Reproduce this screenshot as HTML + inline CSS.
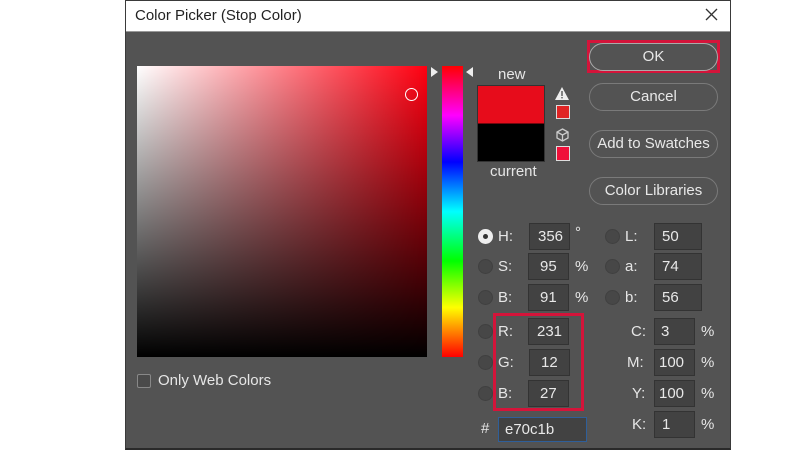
<!DOCTYPE html>
<html><head><style>
*{margin:0;padding:0;box-sizing:border-box}
body{width:800px;height:450px;background:#fff;position:relative;overflow:hidden;font-family:"Liberation Sans",sans-serif;}
.a{position:absolute}
.dlg{left:125px;top:0;width:606px;height:450px;background:#535353;border:1px solid #3a3a3a;border-bottom:2px solid #2a2a2a}
.title{left:126px;top:1px;width:604px;height:31px;background:#fff;border-bottom:1px solid #999;font-size:15px;color:#222;padding:6px 0 0 9px}
.t{color:#e6e6e6;font-size:15px}
.btn{left:589px;width:129px;height:28px;border:1px solid #7a7a7a;border-radius:14px;color:#e8e8e8;font-size:15px;text-align:center;line-height:26px}
.in{background:#424242;border:1px solid #333;color:#e8e8e8;font-size:15px;padding-left:11px;line-height:25px;height:27px}
.rd{width:15px;height:15px;border-radius:50%;background:#474747;border:1px solid #404040}
</style></head><body>
<div class="a dlg"></div>
<div class="a title">Color Picker (Stop Color)</div>
<svg class="a" style="left:705px;top:8px" width="13" height="13"><path d="M1 1L12 12M12 1L1 12" stroke="#333" stroke-width="1.3"/></svg>
<!-- picker -->
<div class="a" style="left:137px;top:66px;width:290px;height:291px;background:linear-gradient(to bottom,rgba(0,0,0,0),#000),linear-gradient(to right,#fff,#ff0011)"></div>
<div class="a" style="left:405px;top:88px;width:13px;height:13px;border:1px solid #fff;border-radius:50%"></div>
<div class="a" style="left:442px;top:66px;width:21px;height:291px;background:linear-gradient(to bottom,#f00,#f0f 17%,#00f 33%,#0ff 50%,#0f0 67%,#ff0 83%,#f00)"></div>
<div class="a" style="left:431px;top:67px;width:0;height:0;border-top:5px solid transparent;border-bottom:5px solid transparent;border-left:7px solid #eee"></div>
<div class="a" style="left:466px;top:67px;width:0;height:0;border-top:5px solid transparent;border-bottom:5px solid transparent;border-right:7px solid #eee"></div>
<div class="a t" style="left:498px;top:66px">new</div>
<div class="a" style="left:477px;top:85px;width:68px;height:77px;border:1px solid #333;background:linear-gradient(#e70c1b 50%,#000 50%)"></div>
<div class="a t" style="left:490px;top:163px">current</div>
<svg class="a" style="left:555px;top:87px" width="14" height="13"><path d="M7 0L14 13H0Z" fill="#eee"/><rect x="6.3" y="4" width="1.4" height="5" fill="#555"/><rect x="6.3" y="10" width="1.4" height="1.4" fill="#555"/></svg>
<div class="a" style="left:556px;top:105px;width:14px;height:14px;background:#e02424;border:1px solid #ddd"></div>
<svg class="a" style="left:556px;top:128px" width="13" height="14"><path d="M6.5 1L12 4V10L6.5 13L1 10V4Z M1 4L6.5 7L12 4 M6.5 7V13" fill="none" stroke="#ccc" stroke-width="1.3"/></svg>
<div class="a" style="left:556px;top:146px;width:14px;height:15px;background:#f0103a;border:1px solid #ddd"></div>
<!-- buttons -->
<div class="a" style="left:587px;top:40px;width:133px;height:33px;border:3px solid #d4143a"></div>
<div class="a btn" style="top:43px;border-color:#aaa">OK</div>
<div class="a btn" style="top:83px">Cancel</div>
<div class="a btn" style="top:130px">Add to Swatches</div>
<div class="a btn" style="top:177px">Color Libraries</div>
<!-- fields -->
<div class="a rd" style="left:478px;top:229px;background:#eee;border-color:#eee"></div>
<div class="a" style="left:483px;top:234px;width:5px;height:5px;border-radius:50%;background:#333"></div>
<div class="a t" style="left:498px;top:228px">H:</div><div class="a in" style="left:529px;top:223px;width:41px;padding-left:8px">356</div><div class="a t" style="left:575px;top:224px">°</div>
<div class="a rd" style="left:478px;top:259px"></div><div class="a t" style="left:498px;top:258px">S:</div><div class="a in" style="left:528px;top:253px;width:41px">95</div><div class="a t" style="left:575px;top:258px">%</div>
<div class="a rd" style="left:478px;top:290px"></div><div class="a t" style="left:498px;top:289px">B:</div><div class="a in" style="left:528px;top:284px;width:41px">91</div><div class="a t" style="left:575px;top:289px">%</div>
<div class="a rd" style="left:605px;top:229px"></div><div class="a t" style="left:625px;top:228px">L:</div><div class="a in" style="left:654px;top:223px;width:48px;padding-left:7px">50</div>
<div class="a rd" style="left:605px;top:259px"></div><div class="a t" style="left:625px;top:258px">a:</div><div class="a in" style="left:654px;top:253px;width:48px;padding-left:7px">74</div>
<div class="a rd" style="left:605px;top:290px"></div><div class="a t" style="left:625px;top:289px">b:</div><div class="a in" style="left:654px;top:284px;width:48px;padding-left:7px">56</div>
<div class="a rd" style="left:478px;top:324px"></div><div class="a t" style="left:498px;top:323px">R:</div><div class="a in" style="left:528px;top:318px;width:41px;padding-left:8px">231</div>
<div class="a rd" style="left:478px;top:355px"></div><div class="a t" style="left:498px;top:354px">G:</div><div class="a in" style="left:529px;top:349px;width:41px">12</div>
<div class="a rd" style="left:478px;top:386px"></div><div class="a t" style="left:498px;top:385px">B:</div><div class="a in" style="left:528px;top:380px;width:41px">27</div>
<div class="a" style="left:493px;top:313px;width:91px;height:98px;border:3px solid #d4143a"></div>
<div class="a t" style="left:631px;top:323px">C:</div><div class="a in" style="left:654px;top:318px;width:41px;padding-left:6px">3</div><div class="a t" style="left:701px;top:323px">%</div>
<div class="a t" style="left:627px;top:354px">M:</div><div class="a in" style="left:654px;top:349px;width:41px;padding-left:4px">100</div><div class="a t" style="left:701px;top:354px">%</div>
<div class="a t" style="left:632px;top:385px">Y:</div><div class="a in" style="left:654px;top:380px;width:41px;padding-left:4px">100</div><div class="a t" style="left:701px;top:385px">%</div>
<div class="a t" style="left:632px;top:416px">K:</div><div class="a in" style="left:654px;top:411px;width:41px;padding-left:7px">1</div><div class="a t" style="left:701px;top:416px">%</div>
<div class="a t" style="left:481px;top:420px">#</div>
<div class="a in" style="left:498px;top:417px;width:89px;height:25px;line-height:23px;border:1px solid #2f5f9a;padding-left:6px">e70c1b</div>
<!-- checkbox -->
<div class="a" style="left:137px;top:374px;width:14px;height:14px;border:1px solid #888;border-radius:2px;background:#4a4a4a"></div>
<div class="a t" style="left:158px;top:372px">Only Web Colors</div>
</body></html>
